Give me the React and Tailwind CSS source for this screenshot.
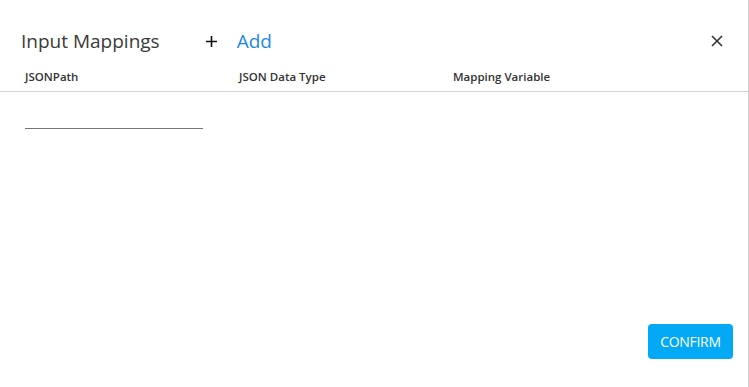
import React from "react";

const font = { fontFamily: '"Open Sans", "Noto Sans", sans-serif' };

export default function App() {
  return (
    <div
      className="w-[749px] h-[387px] bg-white border-r border-[#d0d0d0] flex flex-col text-[#333]"
      style={font}
    >
      {/* header */}
      <div className="flex items-center pl-[21px] pr-[25px] pt-[26px] h-[56px]">
        <h2 className="text-[19px] leading-[28px] text-[#3a3a3a]">Input Mappings</h2>
        <button className="ml-[46px] flex items-center text-[19px] leading-[28px]">
          <svg width="11" height="11" viewBox="0 0 11 11" className="mt-[1px]">
            <path d="M5.5 0 V11 M0 5.5 H11" stroke="#111" strokeWidth="1.6" />
          </svg>
          <span className="ml-[20px] text-[#1e88e5]">Add</span>
        </button>
        <button className="ml-auto text-[#333]" aria-label="close">
          <svg width="12" height="12" viewBox="0 0 12 12">
            <path d="M1 1 L11 11 M11 1 L1 11" stroke="#333" strokeWidth="1.6" />
          </svg>
        </button>
      </div>

      {/* column headers */}
      <div className="flex px-[25px] pt-[12px] pb-[6px] border-b border-[#d4d4d4] text-[11.5px] font-semibold text-[#333]">
        <div className="w-[214px]">JSONPath</div>
        <div className="w-[214px]">JSON Data Type</div>
        <div>Mapping Variable</div>
      </div>

      {/* rows */}
      <div className="flex-1 px-[25px] pt-[36px]">
        <div className="w-[178px] border-b border-[#777]" />
      </div>

      {/* footer */}
      <div className="flex justify-end pr-[15px] pb-[28px]">
        <button className="h-[35px] w-[85px] rounded-[4px] bg-[#03a9f4] text-white text-[14px] tracking-[-0.3px]">
          CONFIRM
        </button>
      </div>
    </div>
  );
}
